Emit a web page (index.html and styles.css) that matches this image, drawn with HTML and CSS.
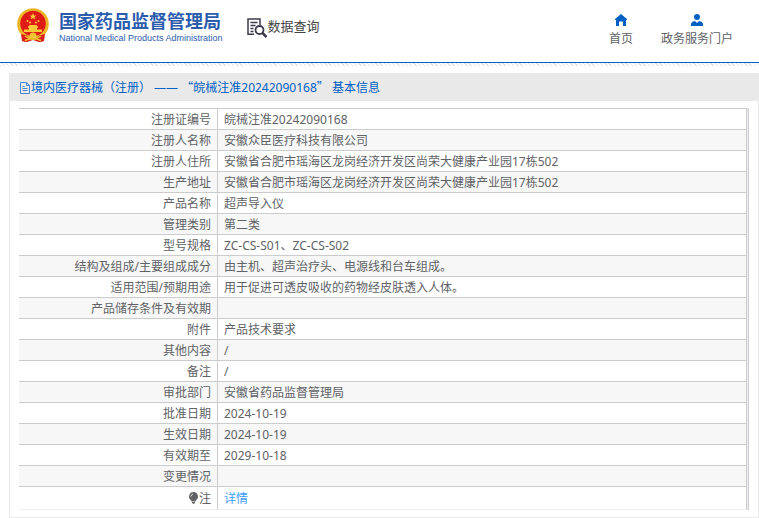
FILE: index.html
```html
<!DOCTYPE html>
<html lang="zh-CN">
<head>
  <meta charset="utf-8">
  <title>数据查询</title>
  <link rel="stylesheet" href="styles.css">
</head>
<body>
  <header class="header">
    <a class="logo" href="#">
      <svg class="emblem" viewBox="0 0 32 35">
        <path fill="#d9201a" d="M5 24h22v9l-5 1-6-2-6 2-5-1z"/>
        <circle cx="16" cy="16" r="15.8" fill="#efb929"/>
        <circle cx="16" cy="15.500" r="12.800" fill="#df1b16"/>
        <circle cx="16" cy="16" r="14.500" fill="none" stroke="#e0a51c" stroke-width="1" stroke-dasharray="1 2"/>
        <path fill="#ffc93a" d="M16 5l1 2.400h2.500l-2 1.600.8 2.500-2.300-1.500-2.300 1.500.8-2.500-2-1.600H15z"/>
        <g fill="#ffc93a">
          <circle cx="10.500" cy="13" r="1"/><circle cx="13" cy="14.500" r="1"/>
          <circle cx="19" cy="14.500" r="1"/><circle cx="21.500" cy="13" r="1"/>
          <path d="M11 19l1.500-2h7l1.500 2v1h-1v1.500h5V24H7v-2.500h5V20h-1z"/>
        </g>
        <path fill="#d9201a" d="M4 26l6 1.500 2 3-2 3.500-5-1zM28 26l-6 1.500-2 3 2 3.500 5-1z"/>
        <circle cx="16" cy="28" r="3.500" fill="#f4c437"/>
        <path d="M8 28q8 6 16 0M8 32.500q8-4 16 0" fill="none" stroke="#f0bd30" stroke-width="1.500"/>
      </svg>
      <span class="logo-text">
        <span class="logo-cn">国家药品监督管理局</span>
        <span class="logo-en">National Medical Products Administration</span>
      </span>
    </a>
    <a class="query" href="#">
      <svg class="query-icon" viewBox="0 0 20 20" fill="none" stroke="#3c3a4c">
        <path stroke-width="1.500" d="M7 16.300H1V1h12v6M3.500 4.500h7M3.500 7.500h5M3.500 10.500h3M3.500 13.500h3"/>
        <circle cx="12.500" cy="12" r="4" stroke-width="1.800"/>
        <path stroke-width="2.500" d="M15.500 15l4 4"/>
      </svg>
      <span>数据查询</span>
    </a>
    <nav class="nav">
      <a class="nav-item" href="#">
        <svg class="nav-icon" viewBox="0 0 12 12"><path d="M6 0l6 5v1h-1v6H8V7.500H4V12H1V6H0V5z"/></svg>
        <span>首页</span>
      </a>
      <a class="nav-item" href="#">
        <svg class="nav-icon" viewBox="0 0 12 12"><circle cx="6" cy="3" r="3"/><path d="M0 12V9.500Q1 7 4 7l2 2 2-2q3 0 4 2.500V12z"/></svg>
        <span>政务服务门户</span>
      </a>
    </nav>
  </header>
  <div class="hatch"></div>

  <main class="card">
    <h1 class="card-title">
      <svg class="doc-icon" viewBox="0 0 12 12" fill="none" stroke="#4a86d4"><path d="M1.500.5h6l3 3v8h-9zM7.500.5v3h3M3.500 4.500h2M3.500 6.500h5M3.500 8.500h5"/></svg>
      <span>境内医疗器械（注册） —— <span class="quote">“</span>皖械注准20242090168<span class="quote">”</span> 基本信息</span>
    </h1>
    <div class="card-body">
      <div class="table-box">
        <table class="info">
          <tbody>
            <tr><th scope="row">注册证编号</th><td>皖械注准20242090168</td></tr>
            <tr><th scope="row">注册人名称</th><td>安徽众臣医疗科技有限公司</td></tr>
            <tr><th scope="row">注册人住所</th><td>安徽省合肥市瑶海区龙岗经济开发区尚荣大健康产业园17栋502</td></tr>
            <tr><th scope="row">生产地址</th><td>安徽省合肥市瑶海区龙岗经济开发区尚荣大健康产业园17栋502</td></tr>
            <tr><th scope="row">产品名称</th><td>超声导入仪</td></tr>
            <tr><th scope="row">管理类别</th><td>第二类</td></tr>
            <tr><th scope="row">型号规格</th><td>ZC-CS-S01、ZC-CS-S02</td></tr>
            <tr><th scope="row">结构及组成/主要组成成分</th><td>由主机、超声治疗头、电源线和台车组成。</td></tr>
            <tr><th scope="row">适用范围/预期用途</th><td>用于促进可透皮吸收的药物经皮肤透入人体。</td></tr>
            <tr><th scope="row">产品储存条件及有效期</th><td></td></tr>
            <tr><th scope="row">附件</th><td>产品技术要求</td></tr>
            <tr><th scope="row">其他内容</th><td>/</td></tr>
            <tr><th scope="row">备注</th><td>/</td></tr>
            <tr><th scope="row">审批部门</th><td>安徽省药品监督管理局</td></tr>
            <tr><th scope="row">批准日期</th><td>2024-10-19</td></tr>
            <tr><th scope="row">生效日期</th><td>2024-10-19</td></tr>
            <tr><th scope="row">有效期至</th><td>2029-10-18</td></tr>
            <tr><th scope="row">变更情况</th><td></td></tr>
            <tr class="note">
              <th scope="row"><svg class="bulb" viewBox="0 0 10 12"><path fill="#606266" d="M5 0a4.500 4.500 0 0 1 2.500 8.200L7 9.500H3l-.5-1.300A4.500 4.500 0 0 1 5 0zM3.500 10h3v1l-1 .8h-1l-1-.8z"/><path d="M2.500 4.500Q2.700 2.500 4.500 2" fill="none" stroke="#fff" stroke-width=".8"/></svg>注</th>
              <td><a class="detail" href="#">详情</a></td>
            </tr>
          </tbody>
        </table>
      </div>
    </div>
  </main>
</body>
</html>
```
FILE: styles.css
```css
* {
  box-sizing: border-box;
  margin: 0;
  padding: 0;
}
body {
  background-color: #fff;
  color: #606266;
  font-family: "Noto Sans", "Noto Sans CJK SC", sans-serif;
  font-size: 12px;
  line-height: 20px;
}
a {
  color: inherit;
  text-decoration: none;
}
svg {
  flex: none;
}
.header {
  display: flex;
  align-items: flex-start;
  padding: 8px 26px 0 17px;
  height: 63px;
  border-bottom: 1px solid #0060c4;
}
.logo {
  display: flex;
  gap: 10px;
  color: #2c5cac;
}
.emblem {
  width: 32px;
  height: 35px;
}
.logo-text {
  display: flex;
  flex-direction: column;
  padding-top: 2px;
}
.logo-cn {
  font-size: 18px;
  font-weight: bold;
  line-height: 22px;
}
.logo-en {
  font-family: "Liberation Sans", sans-serif;
  font-size: 9px;
  line-height: 12px;
}
.query {
  display: flex;
  gap: 1px;
  margin-left: 24px;
  padding-top: 8px;
  color: #444;
  font-size: 13px;
}
.query-icon {
  width: 20px;
  height: 20px;
  margin-top: 2px;
}
.nav {
  display: flex;
  gap: 28px;
  margin-left: auto;
  padding-top: 6px;
}
.nav-item {
  display: flex;
  flex-direction: column;
  align-items: center;
  gap: 3px;
}
.nav-icon {
  width: 12px;
  height: 12px;
  fill: #0060c4;
}
.hatch {
  height: 3px;
  background: repeating-linear-gradient(45deg, #e2e2e2 0, #e2e2e2 1px, #fff 1px, #fff 3px);
}
.card {
  margin: 7px 0 0 9px;
  border: 1px solid #e9e9e9;
}
.card-title {
  display: flex;
  align-items: center;
  padding: 0 9px;
  height: 27px;
  background-color: #e9e9e9;
  color: #0060c4;
  font-size: 12px;
  font-weight: normal;
}
.doc-icon {
  width: 12px;
  height: 12px;
}
.quote {
  font-family: "Noto Sans CJK SC", sans-serif;
}
.card-body {
  padding: 7px 9px;
}
.table-box {
  padding-right: 1px;
  border-right: 1px solid #ccc;
  background-color: #ebeef5;
}
.info {
  width: 100%;
  table-layout: fixed;
  border-spacing: 0;
  border-top: 1px solid #ccc;
  background-color: #fff;
}
.info th,
.info td {
  height: 21px;
  padding-top: 2px;
  border-right: 1px solid #ccc;
  border-bottom: 1px solid #ccc;
  font-weight: normal;
  line-height: 18px;
}
.info th {
  width: 199px;
  padding-right: 6px;
  text-align: right;
}
.info td {
  padding-left: 6px;
}
.info tr:nth-child(even) {
  background-color: #f7f7f7;
}
.info .note th,
.info .note td {
  height: 23px;
  border-bottom-color: #ebeef5;
}
.bulb {
  width: 11px;
  height: 12px;
  vertical-align: -1px;
}
.detail {
  color: #409eff;
}
```
